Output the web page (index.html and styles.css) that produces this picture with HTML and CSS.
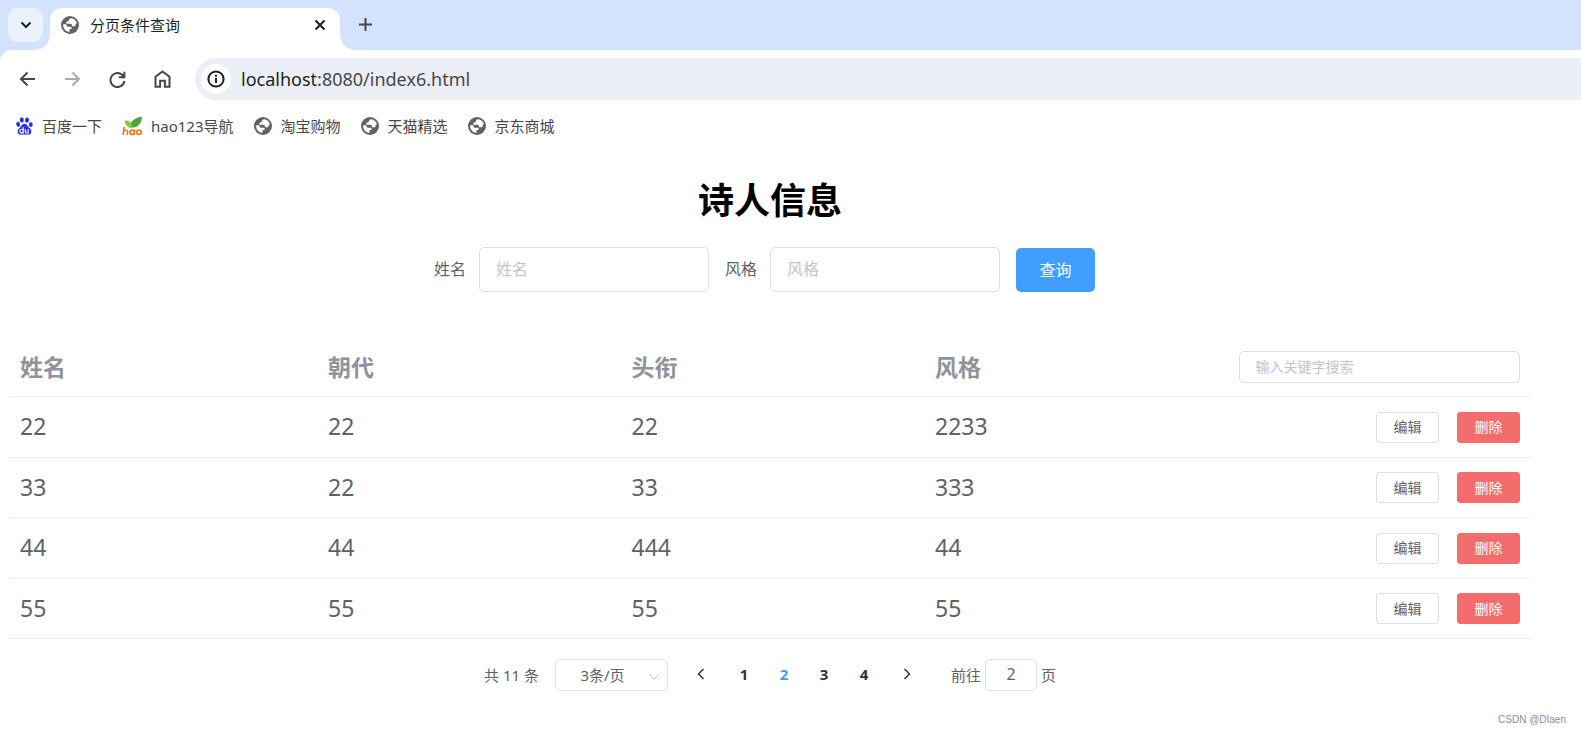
FILE: index.html
```
<!DOCTYPE html>
<html lang="zh-CN">
<head>
<meta charset="utf-8">
<title>分页条件查询</title>
<link rel="stylesheet" href="styles.css">
</head>
<body>
<svg class="defs" aria-hidden="true">
  <symbol id="globe" viewBox="0 0 18 18">
    <circle cx="9" cy="9" r="9" fill="#5f6368"/>
    <path d="M10.2 2.2c-1.600 0-2.200.8-2.200 1.900 0 .9-.6 1.300-1.400 1.300-.9 0-1.300.5-1.300 1.300v1.100h3.900c1.200 0 1.800.7 1.800 1.700v.8h2.200c.9 0 1.300-.6 1.300-1.400 0-.9.5-1.300 1.300-1.300h.2A7 7 0 0 0 10.200 2.200zM2.100 8.300A7 7 0 0 0 8.400 15.900v-1.700c0-.8.5-1.200 1.300-1.200.7 0 1-.4 1-1.100 0-.8-.4-1.200-1.200-1.200H6.800c-.8 0-1.200-.4-1.200-1.200 0-.7-.4-1.200-1.200-1.200z" fill="#fff"/>
  </symbol>
</svg>

<header class="browser">
  <div class="tabstrip">
    <button class="tab-search" aria-label="搜索标签页"><svg width="12" height="8" viewBox="0 0 12 8"><path d="M1.500 1.500 6 6l4.500-4.500" fill="none" stroke="#1f1f1f" stroke-width="2"/></svg></button>
    <div class="tab">
      <svg class="globe"><use href="#globe"/></svg>
      <span class="tab-title">分页条件查询</span>
      <button class="icon-btn" aria-label="关闭"><svg width="12" height="12" viewBox="0 0 12 12"><path d="M1.500 1.500l9 9M10.500 1.500l-9 9" stroke="#1f1f1f" stroke-width="2"/></svg></button>
    </div>
    <button class="icon-btn new-tab" aria-label="新标签页"><svg width="13" height="13" viewBox="0 0 13 13"><path d="M6.500 0v13M0 6.500h13" stroke="#474747" stroke-width="2"/></svg></button>
  </div>
  <div class="chrome">
    <nav class="toolbar">
      <button class="icon-btn" aria-label="后退"><svg width="17" height="16" viewBox="0 0 17 16"><path d="M16 8H2.500M8.500 1.500 2 8l6.500 6.500" fill="none" stroke="#474747" stroke-width="2"/></svg></button>
      <button class="icon-btn" aria-label="前进"><svg width="17" height="16" viewBox="0 0 17 16"><path d="M1 8h13.500M8.500 1.500 15 8l-6.500 6.500" fill="none" stroke="#ababab" stroke-width="2"/></svg></button>
      <button class="icon-btn" aria-label="刷新"><svg width="17" height="17" viewBox="0 0 17 17"><path d="M14.500 5.500A7 7 0 1 0 15.400 10M15.400 .8V6.300H9.800" fill="none" stroke="#474747" stroke-width="2"/></svg></button>
      <button class="icon-btn" aria-label="主页"><svg width="17" height="18" viewBox="0 0 17 18"><path d="M1.500 16.700V6.800L8.500 1.400l7 5.400v9.900h-4.600v-6H6.100v6z" fill="none" stroke="#474747" stroke-width="2"/></svg></button>
      <div class="address">
        <span class="info"><svg width="18" height="18" viewBox="0 0 18 18"><circle cx="9" cy="9" r="7.600" fill="none" stroke="#1f1f1f" stroke-width="2"/><path d="M9 8v5M9 4.800v2" stroke="#1f1f1f" stroke-width="2"/></svg></span>
        <span class="url"><span class="host">localhost</span>:8080/index6.html</span>
      </div>
    </nav>
    <nav class="bookmarks">
      <a href="#"><svg width="17" height="18" viewBox="0 0 17 18"><g fill="#2932e1"><ellipse cx="5.800" cy="3" rx="2" ry="2.700"/><ellipse cx="11" cy="3.100" rx="2" ry="2.700" transform="rotate(10 11 3)"/><ellipse cx="2.100" cy="7.400" rx="1.900" ry="2.500" transform="rotate(-12 2 7)"/><ellipse cx="14.800" cy="7.600" rx="1.900" ry="2.500"/><path d="M8.500 6.800c2.300 0 2.900 2.200 4.200 3.400 1.500 1.400 3 2.600 2.600 5-.4 2.300-2.500 2.700-4 2.400-1.600-.3-3.600-.3-5.400 0-1.700.3-3.800-.2-4.200-2.400-.4-2.300 1.200-3.600 2.600-5 1.300-1.300 1.900-3.400 4.200-3.400z"/></g><path d="M7.200 10.200v5.600H5.400c-2 0-2-3.300 0-3.300h1.800M9.400 12.300v2.500c0 1 .4 1.200 1.200 1.200h1.500v-3.700" fill="none" stroke="#fff" stroke-width="1.200"/></svg><span>百度一下</span></a>
      <a href="#"><svg width="20" height="20" viewBox="0 0 20 20"><path d="M7 11.500C8.500 5.500 13 1.200 20 .8 19.800 7.500 16 11.500 11 11.500z" fill="#4ba83a"/><path d="M2.500 4.500c4.500-.4 7.500 2 8 7H7.500C4.500 10.500 2.800 8.200 2.500 4.500z" fill="#8cc63f"/><path d="M2.300 10.800 1 19M1.400 16c1.200-2.400 4.500-2.200 4.200 0l-.5 3M12.700 13.500 12 19M12.400 16.200c0-3-4.500-2.500-4.500.4 0 2.600 4.200 2.300 4.500-.4M14.600 16.300a2.300 2.100 0 1 0 4.600 0 2.300 2.100 0 1 0-4.600 0" fill="none" stroke="#f27a24" stroke-width="1.700"/></svg><span>hao123导航</span></a>
      <a href="#"><svg class="globe"><use href="#globe"/></svg><span>淘宝购物</span></a>
      <a href="#"><svg class="globe"><use href="#globe"/></svg><span>天猫精选</span></a>
      <a href="#"><svg class="globe"><use href="#globe"/></svg><span>京东商城</span></a>
    </nav>
  </div>
</header>

<main class="page">
  <h1>诗人信息</h1>
  <form class="query">
    <label for="name">姓名</label>
    <input id="name" type="text" placeholder="姓名">
    <label for="style">风格</label>
    <input id="style" type="text" placeholder="风格">
    <button type="button" class="primary">查询</button>
  </form>

  <table class="poets">
    <thead>
      <tr><th class="first">姓名</th><th>朝代</th><th>头衔</th><th>风格</th><th><input type="text" aria-label="搜索" placeholder="输入关键字搜索"></th></tr>
    </thead>
    <tbody>
      <tr><td>22</td><td>22</td><td>22</td><td>2233</td><td><div class="actions"><button>编辑</button><button class="danger">删除</button></div></td></tr>
      <tr><td>33</td><td>22</td><td>33</td><td>333</td><td><div class="actions"><button>编辑</button><button class="danger">删除</button></div></td></tr>
      <tr><td>44</td><td>44</td><td>444</td><td>44</td><td><div class="actions"><button>编辑</button><button class="danger">删除</button></div></td></tr>
      <tr><td>55</td><td>55</td><td>55</td><td>55</td><td><div class="actions"><button>编辑</button><button class="danger">删除</button></div></td></tr>
    </tbody>
  </table>

  <nav class="pagination">
    <span>共 11 条</span>
    <span class="size">
      <select aria-label="每页条数"><option>3条/页</option></select>
      <svg width="12" height="8" viewBox="0 0 12 8"><path d="M1 1l5 5.500L11 1" fill="none" stroke="#c0c4cc"/></svg>
    </span>
    <span class="pager">
      <button class="arrow" aria-label="上一页"><svg width="8" height="12" viewBox="0 0 8 12"><path d="M6.500 1 1.500 6l5 5" fill="none" stroke="#303133" stroke-width="1.500"/></svg></button>
      <button>1</button>
      <button class="current">2</button>
      <button>3</button>
      <button>4</button>
      <button class="arrow" aria-label="下一页"><svg width="8" height="12" viewBox="0 0 8 12"><path d="M1.500 1l5 5-5 5" fill="none" stroke="#303133" stroke-width="1.500"/></svg></button>
    </span>
    <label class="jump">前往 <input type="text" value="2"> 页</label>
  </nav>
</main>
<footer>CSDN @DIaen</footer>
</body>
</html>
```
FILE: styles.css
```
* { box-sizing: border-box; }
body {
  margin: 0;
  min-height: 100vh;
  display: flex;
  flex-direction: column;
  background: #fff;
  color: #606266;
  font-family: "Noto Sans", "Noto Sans CJK SC", sans-serif;
}
button, input, select { font-family: inherit; margin: 0; }
button { cursor: pointer; padding: 0; }
svg { display: block; flex: none; }
.defs { position: absolute; width: 0; height: 0; }
.globe { width: 18px; height: 18px; }

.browser { background: #d3e3fd; }
.tabstrip { display: flex; height: 50px; padding: 8px 8px 0; }
.tab-search {
  display: flex; align-items: center; justify-content: center;
  width: 35px; height: 34px;
  border: 0; border-radius: 11px;
  background: #ebf2fe;
}
.icon-btn {
  display: flex; align-items: center; justify-content: center;
  width: 25px; height: 25px;
  border: 0; background: none;
}
.tab {
  position: relative;
  display: flex; align-items: center;
  width: 290px;
  margin-left: 7px;
  padding: 0 8px 8px 11px;
  border-radius: 12px 12px 0 0;
  background: #fff;
}
.tab::before, .tab::after {
  content: "";
  position: absolute;
  bottom: 0;
  width: 14px; height: 14px;
}
.tab::before { left: -14px; background: radial-gradient(circle at 0 0, transparent 13px, #fff 14px); }
.tab::after { right: -14px; background: radial-gradient(circle at 100% 0, transparent 13px, #fff 14px); }
.tab-title { flex: 1; padding-left: 11px; font-size: 15px; line-height: 20px; color: #1f1f1f; }
.new-tab { margin: 4px 0 0 13px; }

.chrome { background: #fff; border-radius: 12px 0 0 0; }
.toolbar { display: flex; align-items: center; gap: 20px; padding: 8px 0 0 15px; }
.address {
  flex: 1;
  display: flex; align-items: center; gap: 10px;
  height: 42px;
  padding-left: 6px;
  border-radius: 21px 0 0 21px;
  background: #ebeef7;
  color: #474747;
  font-size: 18px; line-height: 24px;
}
.info {
  display: flex; align-items: center; justify-content: center;
  width: 30px; height: 30px;
  border-radius: 50%;
  background: #fff;
}
.host { color: #1f1f1f; }
.bookmarks { display: flex; align-items: center; gap: 20px; height: 52px; padding-left: 16px; }
.bookmarks a {
  display: flex; align-items: center; gap: 9px;
  color: #474747;
  font-size: 15px; line-height: 20px;
  text-decoration: none;
}

.page { flex: 1; padding: 25px 50px 0 9px; }
h1 { margin: 0; text-align: center; font-size: 36px; line-height: 48px; color: #000; }
.query {
  display: flex; align-items: center; justify-content: center;
  padding: 22px 11px 0 0;
  font-size: 16px; line-height: 24px;
}
.query label { padding-bottom: 2px; }
input, select {
  border: 1px solid #dcdfe6;
  border-radius: 5px;
  background: #fff;
  color: #606266;
  outline: 0;
}
input::placeholder { color: #c0c4cc; opacity: 1; }
.query input { width: 230px; height: 45px; margin: 0 16px 0 13px; padding: 0 16px 2px; font-size: 16px; }
.primary {
  width: 79px; height: 44px;
  padding-bottom: 2px;
  border: 0; border-radius: 5px;
  background: #409eff; color: #fff;
  font-size: 16px;
}

.poets { width: 100%; margin-top: 47px; table-layout: fixed; border-collapse: separate; border-spacing: 0; }
.poets th, .poets td {
  height: 60px;
  padding: 0 11px 2px;
  border-bottom: 1px solid #ebeef5;
  text-align: left;
  font-size: 23px; line-height: 32px;
}
.poets td:last-child { padding-bottom: 0; }
.poets th { height: 58px; color: #909399; }
.poets tbody tr:nth-child(odd) td { height: 61px; }
.poets .first { width: 308px; }
.poets input { display: block; width: 100%; height: 32px; padding: 0 16px; font-size: 14px; }
.actions { display: flex; justify-content: flex-end; gap: 18px; }
.actions button {
  width: 63px; height: 31px;
  border: 1px solid #dcdfe6; border-radius: 3px;
  background: #fff; color: #606266;
  font-size: 14px; line-height: 20px;
}
.actions .danger { border-color: #f56c6c; background: #f56c6c; color: #fff; }

.pagination {
  display: flex; align-items: center; justify-content: center;
  padding-top: 20px;
  font-size: 15px; line-height: 20px;
}
.size { position: relative; margin-left: 16px; }
.size select {
  display: block;
  width: 113px; height: 32px;
  padding: 0 18px 0 0;
  appearance: none;
  font-size: 15px;
  text-align: center; text-align-last: center;
}
.size svg { position: absolute; right: 8px; top: 14px; }
.pager { display: flex; margin: 0 21px 0 10px; }
.pager button {
  display: flex; align-items: center; justify-content: center;
  width: 40px; height: 32px;
  padding-bottom: 2px;
  border: 0; background: none;
  color: #303133;
  font-size: 15px; font-weight: 700;
}
.pager .arrow { width: 46px; }
.pager .current { color: #409eff; }
.jump { display: flex; align-items: center; gap: 4px; }
.jump input { width: 52px; height: 32px; padding: 0 0 2px; text-align: center; font-size: 16px; }
footer { padding: 0 15px 5px; text-align: right; font: 10px/16px "Liberation Sans", sans-serif; color: #8c8c8c; }
```
